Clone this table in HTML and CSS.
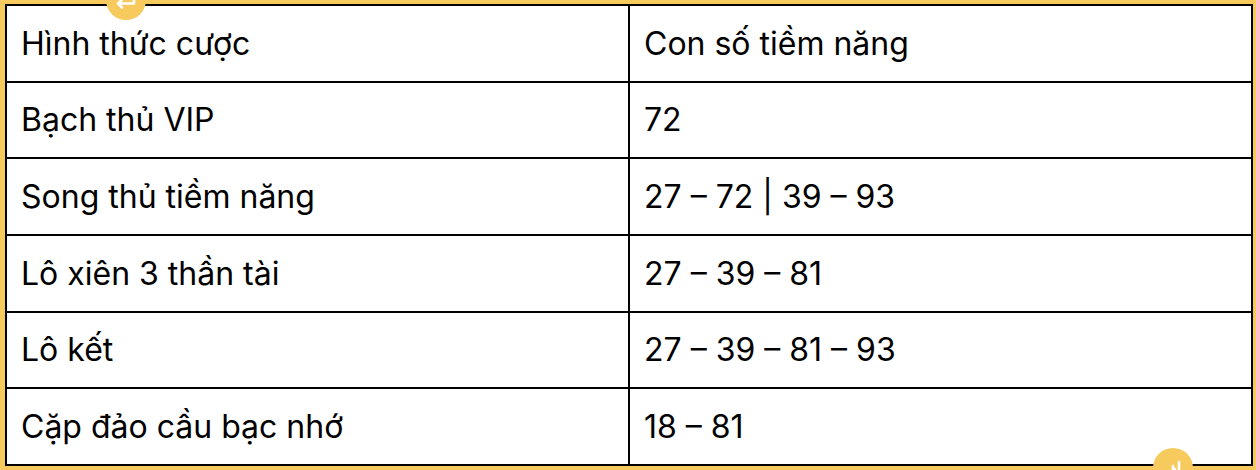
FILE: index.html
```html
<!DOCTYPE html>
<html lang="vi">
<head>
<meta charset="utf-8">
<title>Bảng</title>
<link rel="stylesheet" href="styles.css">
</head>
<body>
<div class="frame">
  <table class="bets">
    <tr><td>Hình thức cược</td><td>Con số tiềm năng</td></tr>
    <tr><td>Bạch thủ VIP</td><td>72</td></tr>
    <tr><td>Song thủ tiềm năng</td><td>27 – 72 | 39 – 93</td></tr>
    <tr><td>Lô xiên 3 thần tài</td><td>27 – 39 – 81</td></tr>
    <tr><td>Lô kết</td><td>27 – 39 – 81 – 93</td></tr>
    <tr><td>Cặp đảo cầu bạc nhớ</td><td>18 – 81</td></tr>
  </table>
  <div class="handle handle-top">
    <svg viewBox="0 0 40 40" width="40" height="40"><path d="M28 23.5 H12 M16 19.5 L12 23.5 L16 27.5 M28 23.5 V16" fill="none" stroke="#fff" stroke-width="2.6" stroke-linecap="round" stroke-linejoin="round"/></svg>
  </div>
  <div class="handle handle-bottom">
    <svg viewBox="0 0 40 40" width="40" height="40"><path d="M26 14 V30 M20 18 L20 26 M17 26 L22 21" fill="none" stroke="#fff" stroke-width="2.6" stroke-linecap="round" stroke-linejoin="round"/></svg>
  </div>
</div>
</body>
</html>
```
FILE: styles.css
```css
html, body {
  margin: 0;
  padding: 0;
  background: #f7ca5d;
}
body {
  width: 1256px;
  height: 470px;
  overflow: hidden;
  font-family: Inter, "Noto Sans", sans-serif;
}
.frame {
  position: relative;
  padding: 4px 3px 4px 5px;
  height: 470px;
  box-sizing: border-box;
}
.bets {
  width: 100%;
  height: 462px;
  border-collapse: collapse;
  background: #fff;
  table-layout: fixed;
}
.bets td {
  border: 2px solid #000;
  padding: 0 0 0 14px;
  font-size: 32px;
  color: #000;
  vertical-align: middle;
  height: 73px;
}
.bets td:first-child {
  width: 607px;
}
.handle {
  position: absolute;
  width: 40px;
  height: 40px;
  border-radius: 50%;
  background: #f7ca5d;
}
.handle-top {
  left: 106px;
  top: -20px;
}
.handle-bottom {
  left: 1153px;
  top: 448px;
}
.handle svg {
  display: block;
}
```
